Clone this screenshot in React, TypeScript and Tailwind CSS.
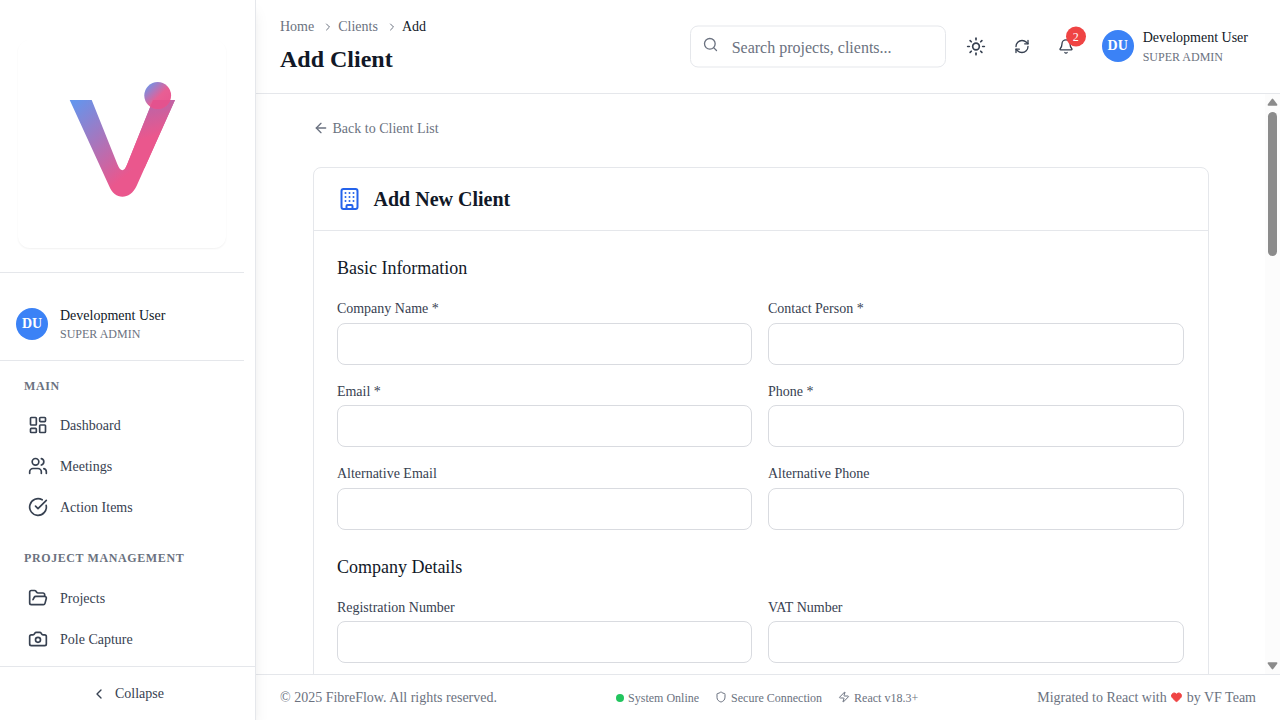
import {
  ArrowLeft,
  Bell,
  Building,
  Camera,
  ChevronLeft,
  ChevronRight,
  CircleCheckBig,
  FolderOpen,
  Heart,
  LayoutDashboard,
  RefreshCw,
  Search,
  Shield,
  Sun,
  Users,
  Zap,
  type LucideIcon,
} from 'lucide-react';

function Logo() {
  return (
    <svg viewBox="-0.5 0 208 208" className="h-[208px] w-[208px]">
      <defs>
        <linearGradient id="vee" x1="54" y1="62" x2="112" y2="132" gradientUnits="userSpaceOnUse">
          <stop offset="0" stopColor="#6495ed" />
          <stop offset="1" stopColor="#ea578d" />
        </linearGradient>
        <linearGradient id="veeRight" x1="136" y1="54" x2="148" y2="92" gradientUnits="userSpaceOnUse">
          <stop offset="0" stopColor="#b068ae" />
          <stop offset="1" stopColor="#ea578d" />
        </linearGradient>
        <linearGradient id="dot" x1="128" y1="45" x2="150" y2="67" gradientUnits="userSpaceOnUse">
          <stop offset="0" stopColor="#6d94ea" />
          <stop offset="0.55" stopColor="#e85f94" />
          <stop offset="1" stopColor="#ea568f" />
        </linearGradient>
        <clipPath id="dotClip">
          <circle cx="139.200" cy="55.500" r="13.400" />
        </clipPath>
      </defs>
      <path
        d="M51.200 60H73.200L98.800 124Q103.800 136.500 108.800 124L134.500 60H156.500L118.200 145.700C111.600 160.400 96 160.400 90.500 145.700Z"
        fill="url(#vee)"
      />
      <path d="M134.500 60H156.500L126 128L106.500 128.500Q107.800 127 108.800 124Z" fill="url(#veeRight)" />
      <circle cx="139.200" cy="55.500" r="13.400" fill="url(#dot)" />
      <path d="M134.500 60H156.500L148 79L128 76Z" fill="#e4528e" clipPath="url(#dotClip)" />
    </svg>
  );
}

function NavItem({ icon: Icon, label }: { icon: LucideIcon; label: string }) {
  return (
    <a className="flex h-[41px] items-center gap-3 pl-7 text-sm text-[#374151]">
      <Icon size={20} strokeWidth={2} />
      <span className="pt-0.5">{label}</span>
    </a>
  );
}

function NavHeading({ children }: { children: string }) {
  return (
    <h3 className="h-4 pl-6 text-xs leading-4 font-bold tracking-wider text-[#6b7280]">{children}</h3>
  );
}

function Avatar() {
  return (
    <div className="flex h-8 w-8 shrink-0 items-center justify-center rounded-full bg-[#3b82f6] text-sm font-bold text-white">
      DU
    </div>
  );
}

function Sidebar() {
  return (
    <aside className="relative z-10 flex w-64 shrink-0 flex-col border-r border-[#e5e7eb] bg-white shadow-lg">
      <div className="flex min-h-0 w-[244px] flex-1 flex-col overflow-hidden">
        <div className="h-[273px] shrink-0 border-b border-[#e5e7eb] pt-10 pl-[18px]">
          <div className="h-[208px] w-[208px] rounded-xl shadow-[0_1px_2px_0_rgba(0,0,0,0.06)]">
            <Logo />
          </div>
        </div>
        <div className="flex h-[88px] shrink-0 items-start gap-3 border-b border-[#e5e7eb] pt-[35px] pl-4">
          <Avatar />
          <div className="-mt-0.5">
            <p className="text-sm leading-5 text-[#111827]">Development User</p>
            <p className="text-xs leading-4 text-[#6b7280]">SUPER ADMIN</p>
          </div>
        </div>
        <nav className="pt-[17px]">
          <NavHeading>MAIN</NavHeading>
          <div className="mt-2.5 mb-[23px]">
            <NavItem icon={LayoutDashboard} label="Dashboard" />
            <NavItem icon={Users} label="Meetings" />
            <NavItem icon={CircleCheckBig} label="Action Items" />
          </div>
          <NavHeading>PROJECT MANAGEMENT</NavHeading>
          <div className="mt-[11px]">
            <NavItem icon={FolderOpen} label="Projects" />
            <NavItem icon={Camera} label="Pole Capture" />
          </div>
        </nav>
      </div>
      <button className="flex h-[54px] shrink-0 items-center justify-center gap-2 border-t border-[#e5e7eb] text-sm text-[#374151]">
        <ChevronLeft size={16} />
        Collapse
      </button>
    </aside>
  );
}

function Header() {
  return (
    <header className="flex h-[94px] shrink-0 items-start border-b border-[#e5e7eb] bg-white pl-6">
      <div className="flex-1 pt-[17px]">
        <div className="flex h-5 items-center text-sm text-[#6b7280]">
          <span>Home</span>
          <ChevronRight size={12} className="mr-1 ml-2" />
          <span>Clients</span>
          <ChevronRight size={12} className="mr-1 ml-2" />
          <span className="text-[#111827]">Add</span>
        </div>
        <h1 className="mt-[7px] text-2xl leading-[30px] font-bold text-[#111827]">Add Client</h1>
      </div>
      <div className="flex h-[92px] items-center pr-8 text-[#374151]">
        <div className="flex h-[42px] w-[256px] translate-y-[0.500px] items-center rounded-lg border border-[#e5e7eb] pl-[11px] text-[#6b7280]">
          <Search size={16} className="-mt-1 translate-x-[0.500px]" />
          <span className="pt-px pl-3.5 text-base">Search projects, clients...</span>
        </div>
        <Sun size={20} className="ml-5 translate-y-[0.500px]" />
        <RefreshCw size={16} className="ml-7 translate-y-[0.500px]" />
        <div className="relative ml-7 translate-y-[0.500px]">
          <Bell size={16} />
          <span className="absolute -top-[12px] left-2 flex h-5 w-5 items-center justify-center rounded-full bg-[#ef4444] text-xs text-white">
            2
          </span>
        </div>
        <div className="ml-7 flex items-center gap-[9px]">
          <Avatar />
          <div className="pt-0.5">
            <p className="text-sm leading-5 text-[#111827]">Development User</p>
            <p className="text-xs leading-[18px] text-[#6b7280]">SUPER ADMIN</p>
          </div>
        </div>
      </div>
    </header>
  );
}

function Section({ title, fields }: { title: string; fields: string[] }) {
  return (
    <section>
      <h3 className="text-lg leading-7 text-[#111827]">{title}</h3>
      <div className="mt-[17px] grid grid-cols-2 gap-x-[15.600px] gap-y-4">
        {fields.map((field) => (
          <label key={field} className="block h-[66.500px] text-sm leading-5 text-[#374151]">
            {field}
            <input className="mt-[3.900px] block h-[42px] w-full rounded-lg border border-[#d9dbe0] bg-white px-3" />
          </label>
        ))}
      </div>
    </section>
  );
}

function Scrollbar() {
  return (
    <div className="flex w-[15px] shrink-0 flex-col items-center bg-[#fcfcfc] pt-1 pb-1">
      <svg width="11" height="8" viewBox="0 0 11 8" fill="#8b8b8b">
        <path d="M4.800 0.900Q5.500 0.200 6.200 0.900L10.200 6.200Q10.800 7.600 9.500 7.800H1.500Q0.200 7.600 0.800 6.200Z" />
      </svg>
      <div className="mt-1.5 h-36 w-[9px] rounded-full bg-[#8b8b8b]" />
      <div className="flex-1" />
      <svg width="11" height="8" viewBox="0 0 11 8" fill="#8b8b8b">
        <path d="M4.800 7.100Q5.500 7.800 6.200 7.100L10.200 1.800Q10.800 0.400 9.500 0.200H1.500Q0.200 0.400 0.800 1.800Z" />
      </svg>
    </div>
  );
}

function Footer() {
  return (
    <footer className="flex h-[46px] shrink-0 items-center justify-between border-t border-[#e5e7eb] bg-white px-6 text-sm text-[#6b7280]">
      <span>© 2025 FibreFlow. All rights reserved.</span>
      <div className="flex items-center gap-4 text-xs">
        <span className="flex items-center gap-1">
          <span className="h-2 w-2 rounded-full bg-[#22c55e]" />
          System Online
        </span>
        <span className="flex items-center gap-1">
          <Shield size={12} className="-mt-px" />
          Secure Connection
        </span>
        <span className="flex items-center gap-1">
          <Zap size={12} className="-mt-px" />
          React v18.3+
        </span>
      </div>
      <span className="flex items-center gap-1">
        Migrated to React with
        <Heart size={12} className="-mt-0.5 -translate-x-[0.500px] fill-[#ef4444] text-[#ef4444]" />
        by VF Team
      </span>
    </footer>
  );
}

export default function App() {
  return (
    <div className="flex h-[720px] w-[1280px] overflow-hidden bg-white font-['Liberation_Serif',serif]">
      <Sidebar />
      <div className="flex min-w-0 flex-1 flex-col">
        <Header />
        <div className="flex min-h-0 flex-1">
          <main className="min-w-0 flex-1 overflow-hidden pt-6">
            <div className="mx-auto w-[896px]">
              <button className="flex h-5 items-center gap-1 text-sm text-[#6b7280]">
                <ArrowLeft size={16} />
                <span className="pt-0.5">Back to Client List</span>
              </button>
              <div className="mt-[29px] rounded-lg border border-[#e5e7eb] bg-white">
                <div className="flex h-[63px] items-center gap-[12.500px] border-b border-[#e5e7eb] px-[23.500px]">
                  <Building size={24} className="translate-x-[0.500px] text-[#2563eb]" />
                  <h2 className="text-xl font-bold text-[#111827]">Add New Client</h2>
                </div>
                <form className="flex flex-col gap-[22px] pt-[23px] pr-6 pb-6 pl-[23.400px]">
                  <Section
                    title="Basic Information"
                    fields={[
                      'Company Name *',
                      'Contact Person *',
                      'Email *',
                      'Phone *',
                      'Alternative Email',
                      'Alternative Phone',
                    ]}
                  />
                  <Section title="Company Details" fields={['Registration Number', 'VAT Number']} />
                </form>
              </div>
            </div>
          </main>
          <Scrollbar />
        </div>
        <Footer />
      </div>
    </div>
  );
}
